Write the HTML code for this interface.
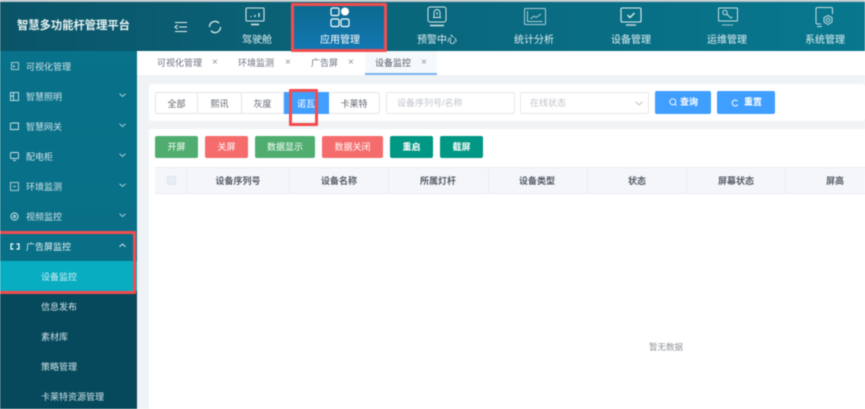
<!DOCTYPE html>
<html lang="zh"><head><meta charset="utf-8"><style>
*{box-sizing:border-box;margin:0;padding:0}
html,body{width:865px;height:409px;overflow:hidden;background:#fff}
body{font-family:"Liberation Sans","Noto Sans CJK SC",sans-serif;font-size:9px;position:relative}
#p{position:absolute;left:0;top:0;width:865px;height:409px;overflow:hidden;filter:blur(.5px);background:#f0f3f5}
.a{position:absolute}
.t{position:absolute;white-space:nowrap;line-height:12px}
.c{transform:translateX(-50%)}
#hd{left:0;top:1px;width:865px;height:50px;background:linear-gradient(90deg,#0a5468 0,#0a6176 30%,#08788f 100%)}
#top{left:0;top:0;width:865px;height:2px;background:#b9c4c8}
#side{left:0;top:51px;width:137px;height:358px;background:linear-gradient(180deg,#08728a 0,#086d84 100%)}
.nl{color:#dfeef2;font-size:10px;top:35px}
.si{color:#cfe2e8;left:26px;font-size:9px}
.sub{color:#cfe2e8;left:41px;font-size:9px}
.th{color:#555b66;font-weight:700;font-size:9px;top:175px}
.tab{color:#6b7280;top:57px}
.x{color:#8a9099;top:57px;font-size:10px}
.b{position:absolute;color:#fff;text-align:center;line-height:22px;border-radius:2px;font-size:9px;top:136px;height:22px}
.g{position:absolute;color:#60656e;text-align:center;line-height:22px;top:92px;height:22px;background:#fff;border:1px solid #e3e6ea;border-left:0}
svg{position:absolute;overflow:visible;fill:none}
</style></head><body><div id="p">
<div class="a" id="hd"></div><div class="a" id="top"></div>
<div class="t" style="left:17px;top:20px;font-size:11.3px;font-weight:700;color:#e8f1f3">智慧多功能杆管理平台</div>
<svg style="left:174px;top:21px" width="14" height="12" stroke="#e6f0f2" stroke-width="1.1"><path d="M1 1.5H13M5 6H13M1 10.5H13M3.5 4L1 6L3.5 8"/></svg>
<svg style="left:208px;top:20px" width="14" height="14" stroke="#e6f0f2" stroke-width="1.2"><path d="M1.5 7A5.5 5.5 0 0 1 11 3.2M12.5 7A5.5 5.5 0 0 1 3 10.8"/></svg>

<div class="a" style="left:292px;top:4px;width:94px;height:47px;background:linear-gradient(180deg,#0b6a8e,#1378b4)"></div>

<svg style="left:245px;top:7px" width="20" height="20" stroke="#d5e5e9" stroke-width="1.1"><rect x="1" y="1" width="18" height="13" rx="1"/><path d="M6 17.5H14" stroke-width="1.6"/><path d="M6 10V9M10 10V8M14 10V6" stroke-width="1.4"/></svg>
<svg style="left:330px;top:6px" width="20" height="22" stroke="#fff" stroke-width="1.2"><rect x="1" y="2" width="8" height="7.5" rx="1.5"/><circle cx="15" cy="5.5" r="4" fill="#fff" stroke="none"/><rect x="1" y="13" width="8" height="7.5" rx="1.5"/><rect x="11" y="13" width="8" height="7.5" rx="1.5"/></svg>
<svg style="left:427px;top:6px" width="20" height="22" stroke="#d5e5e9" stroke-width="1"><rect x="1" y="1" width="18" height="15" rx="2"/><path d="M7 11.5V6.5A3 3 0 0 1 13 6.5V11.5M6 11.5H14M10 6V9"/><path d="M3 19.5H17" stroke-width="1.5"/></svg>
<svg style="left:524px;top:8px" width="22" height="18" stroke="#a9ccd4" stroke-width="1"><rect x=".5" y=".5" width="21" height="16" rx="1"/><path d="M3.5 3V13.5H18.5M6.5 11L10 8L12 9.5L17 6"/></svg>
<svg style="left:620px;top:7px" width="22" height="20" stroke="#e0edf0" stroke-width="1.1"><rect x="1" y="1" width="20" height="14" rx="1"/><path d="M7.5 8L10 10.5L14.5 6" stroke-width="1.4"/><path d="M6 18H16" stroke-width="1.6" stroke="#b4d1d8"/></svg>
<svg style="left:718px;top:7px" width="20" height="20" stroke="#c6dde2" stroke-width="1"><rect x=".5" y="1" width="19" height="13" rx=".5"/><circle cx="7" cy="5.5" r="2.2"/><path d="M8.5 7L13 11L14.5 10"/><path d="M4 18H15" stroke="#9fc3cc"/></svg>
<svg style="left:815px;top:7px" width="20" height="22" stroke="#c6dde2" stroke-width="1"><path d="M6 17H2.5Q1 17 1 15.5V2Q1 .5 2.5 .5H16Q17.5 .5 17.5 2V7M2 19.5H7"/><path d="M13 8.5L17 10.5V15L13 17.5L9 15V10.5Z"/><circle cx="13" cy="13" r="1.8"/></svg>

<div class="t c nl" style="left:257px">驾驶舱</div>
<div class="t c nl" style="left:340px;color:#fff">应用管理</div>
<div class="t c nl" style="left:437px">预警中心</div>
<div class="t c nl" style="left:534px">统计分析</div>
<div class="t c nl" style="left:631px">设备管理</div>
<div class="t c nl" style="left:727px">运维管理</div>
<div class="t c nl" style="left:825px">系统管理</div>

<div class="a" id="side"></div>
<div class="a" style="left:0;top:261px;width:137px;height:30px;background:#08adc2"></div>
<div class="a" style="left:0;top:291px;width:137px;height:118px;background:#06495c"></div>

<div class="t si" style="top:61px">可视化管理</div>
<div class="t si" style="top:91px">智慧照明</div>
<div class="t si" style="top:121px">智慧网关</div>
<div class="t si" style="top:151px">配电柜</div>
<div class="t si" style="top:181px">环境监测</div>
<div class="t si" style="top:211px">视频监控</div>
<div class="t si" style="top:241px;color:#e8f2f4">广告屏监控</div>
<div class="t sub" style="top:271px;color:#cdeef3">设备监控</div>
<div class="t sub" style="top:301px">信息发布</div>
<div class="t sub" style="top:331px">素材库</div>
<div class="t sub" style="top:361px">策略管理</div>
<div class="t sub" style="top:391px">卡莱特资源管理</div>

<svg style="left:11px;top:62px" width="8" height="8" stroke="#b9d4da" stroke-width=".9"><rect x=".5" y=".5" width="7" height="7"/><path d="M2 3L3.5 4.5L2 5"/></svg>
<svg style="left:10px;top:92px" width="9" height="9" stroke="#cfe2e8" stroke-width=".9"><rect x=".5" y=".5" width="8" height="8"/><path d="M3.5 .5V8.5M.5 4H3.5"/></svg>
<svg style="left:10px;top:122px" width="9" height="9" stroke="#cfe2e8" stroke-width=".9"><path d="M1 1H8.5V7.5H.5V1"/></svg>
<svg style="left:10px;top:152px" width="9" height="9" stroke="#cfe2e8" stroke-width=".9"><rect x=".5" y=".5" width="8" height="6" rx="1"/><path d="M3 8.5H6"/></svg>
<svg style="left:10px;top:182px" width="9" height="9" stroke="#b9d4da" stroke-width=".9"><rect x=".5" y=".5" width="8" height="8"/><path d="M3 4.5H6"/></svg>
<svg style="left:10px;top:212px" width="9" height="9" stroke="#cfe2e8" stroke-width="1"><circle cx="4.5" cy="4.5" r="3.6"/><circle cx="4.5" cy="4.5" r="1.2"/></svg>
<svg style="left:10px;top:243px" width="10" height="7" stroke="#fff" stroke-width="1.2"><path d="M3.5 1H1V6H3.5M6.5 1H9V6H6.5"/></svg>
<svg style="left:119px;top:93px" width="7" height="5" stroke="#a9cdd6"><path d="M.5 .7L3.5 3.5L6.5 .7"/></svg>
<svg style="left:119px;top:123px" width="7" height="5" stroke="#a9cdd6"><path d="M.5 .7L3.5 3.5L6.5 .7"/></svg>
<svg style="left:119px;top:153px" width="7" height="5" stroke="#a9cdd6"><path d="M.5 .7L3.5 3.5L6.5 .7"/></svg>
<svg style="left:119px;top:183px" width="7" height="5" stroke="#a9cdd6"><path d="M.5 .7L3.5 3.5L6.5 .7"/></svg>
<svg style="left:119px;top:213px" width="7" height="5" stroke="#a9cdd6"><path d="M.5 .7L3.5 3.5L6.5 .7"/></svg>
<svg style="left:119px;top:243px" width="7" height="5" stroke="#d5e5e9"><path d="M.5 3.8L3.5 1L6.5 3.8"/></svg>

<div class="a" style="left:137px;top:51px;width:728px;height:24px;background:#fff"></div>
<div class="a" style="left:365px;top:51px;width:72px;height:24px;background:#f6f9fc;border-bottom:2px solid #79b2f2"></div>
<div class="t tab" style="left:157px">可视化管理</div><div class="t x" style="left:212px">×</div>
<div class="t tab" style="left:238px">环境监测</div><div class="t x" style="left:285px">×</div>
<div class="t tab" style="left:311px">广告屏</div><div class="t x" style="left:348px">×</div>
<div class="t tab" style="left:375px;color:#555b66">设备监控</div><div class="t x" style="left:421px">×</div>

<div class="a" style="left:149px;top:84px;width:716px;height:37px;background:#fff;border-radius:3px"></div>
<div class="a" style="left:149px;top:129px;width:716px;height:280px;background:#fff"></div>

<div class="g" style="left:155px;width:43px;border-left:1px solid #e3e6ea;border-radius:2px 0 0 2px">全部</div>
<div class="g" style="left:198px;width:44px">熙讯</div>
<div class="g" style="left:242px;width:42px">灰度</div>
<div class="g" style="left:284px;width:45px;background:#409eff;border-color:#409eff;color:#fff">诺瓦</div>
<div class="g" style="left:329px;width:51px;border-radius:0 2px 2px 0">卡莱特</div>

<div class="a" style="left:386px;top:92px;width:129px;height:22px;background:#fff;border:1px solid #e5e8ec;border-radius:2px"></div>
<div class="t" style="left:397px;top:97px;color:#c0c4cc">设备序列号/名称</div>
<div class="a" style="left:520px;top:92px;width:129px;height:22px;background:#fff;border:1px solid #e5e8ec;border-radius:2px"></div>
<div class="t" style="left:530px;top:97px;color:#c0c4cc">在线状态</div>
<svg style="left:635px;top:101px" width="8" height="5" stroke="#c0c4cc"><path d="M.5 .7L4 4L7.5 .7"/></svg>

<div class="b" style="left:655px;top:91px;width:56px;height:23px;background:#409eff;line-height:23px;padding-left:12px;font-weight:700">查询</div>
<svg style="left:669px;top:98px" width="8" height="8" stroke="#fff" stroke-width=".9"><circle cx="3.8" cy="3.8" r="3"/><path d="M6 6L7.5 7.5"/></svg>
<div class="b" style="left:717px;top:91px;width:58px;height:23px;background:#409eff;line-height:23px;padding-left:14px;font-weight:700">重置</div>
<svg style="left:731px;top:99px" width="8" height="8" stroke="#fff" stroke-width="1"><path d="M6.5 2A3 3 0 1 0 6.8 5.5"/></svg>

<div class="b" style="left:155px;width:43px;background:#4fae6f">开屏</div>
<div class="b" style="left:205px;width:43px;background:#f56c6c">关屏</div>
<div class="b" style="left:255px;width:60px;background:#4fae6f">数据显示</div>
<div class="b" style="left:322px;width:61px;background:#f56c6c">数据关闭</div>
<div class="b" style="left:390px;width:43px;background:#009784;font-weight:700">重启</div>
<div class="b" style="left:440px;width:43px;background:#009784;font-weight:700">截屏</div>

<div class="a" style="left:155px;top:167px;width:710px;height:27px;background:#f4f6fa;border-top:1px solid #e9ecf0;border-bottom:1px solid #e9ecf0"></div>
<div class="a" style="left:167px;top:176px;width:9px;height:9px;background:#e9edf5;border:1px solid #dfe4ee;border-radius:1px"></div>
<div class="a" style="left:186px;top:167px;width:1px;height:27px;background:#e9ecf0"></div>
<div class="a" style="left:289px;top:167px;width:1px;height:27px;background:#e9ecf0"></div>
<div class="a" style="left:388px;top:167px;width:1px;height:27px;background:#e9ecf0"></div>
<div class="a" style="left:488px;top:167px;width:1px;height:27px;background:#e9ecf0"></div>
<div class="a" style="left:587px;top:167px;width:1px;height:27px;background:#e9ecf0"></div>
<div class="a" style="left:686px;top:167px;width:1px;height:27px;background:#e9ecf0"></div>
<div class="a" style="left:785px;top:167px;width:1px;height:27px;background:#e9ecf0"></div>
<div class="t c th" style="left:238px">设备序列号</div>
<div class="t c th" style="left:339px">设备名称</div>
<div class="t c th" style="left:438px">所属灯杆</div>
<div class="t c th" style="left:537px">设备类型</div>
<div class="t c th" style="left:637px">状态</div>
<div class="t c th" style="left:736px">屏幕状态</div>
<div class="t c th" style="left:835px">屏高</div>
<div class="t c" style="left:666px;top:341px;color:#8c9096;font-size:8.5px">暂无数据</div>

<div class="a" style="left:291px;top:3px;width:96px;height:49px;border:3px solid #f24c4f;border-radius:1px"></div>
<div class="a" style="left:289px;top:89px;width:29px;height:37px;border:3px solid #f24c4f;border-radius:1px"></div>
<div class="a" style="left:-4px;top:231px;width:140px;height:63px;border:3px solid #f24c4f;border-radius:1px"></div>
</div></body></html>
